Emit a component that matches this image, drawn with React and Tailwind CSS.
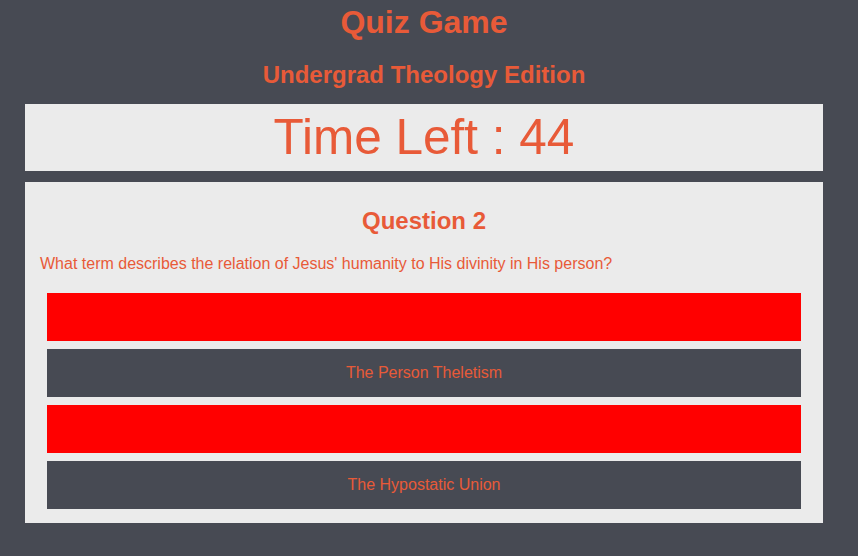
const ANSWERS = [
  { label: '', tone: 'wrong' },
  { label: 'The Person Theletism', tone: 'idle' },
  { label: '', tone: 'wrong' },
  { label: 'The Hypostatic Union', tone: 'idle' },
];

const TONE_STYLES = {
  wrong: 'bg-[#ff0000]',
  idle: 'bg-[#474a53]',
};

export default function App() {
  return (
    <div className="min-h-[556px] bg-[#474a53] font-['Liberation_Sans',Arial,sans-serif] text-[#e85a38]">
      <div className="ml-[25px] w-[798px]">
        <h1 className="pt-[4px] text-center text-[32px] leading-[37px] font-bold">Quiz Game</h1>
        <h2 className="mt-[20px] text-center text-[24px] leading-[28px] font-bold">
          Undergrad Theology Edition
        </h2>

        <div className="mt-[15px] flex h-[67px] items-center justify-center bg-[#ebebeb]">
          <p className="text-[49.5px] leading-normal">Time Left : 44</p>
        </div>

        <section className="mt-[11px] bg-[#ebebeb] pt-[25px] pb-[14px]">
          <h3 className="text-center text-[24px] leading-[28px] font-bold">Question 2</h3>
          <p className="mt-[20px] pl-[15px] text-[16px] leading-[18px]">
            What term describes the relation of Jesus' humanity to His divinity in His person?
          </p>
          <div className="mt-[20px] flex flex-col gap-[8px] px-[22px]">
            {ANSWERS.map((a, i) => (
              <button
                key={i}
                className={`flex h-[48px] w-full items-center justify-center text-[16px] leading-[18px] text-[#e85a38] ${TONE_STYLES[a.tone]}`}
              >
                {a.label}
              </button>
            ))}
          </div>
        </section>
      </div>
    </div>
  );
}
